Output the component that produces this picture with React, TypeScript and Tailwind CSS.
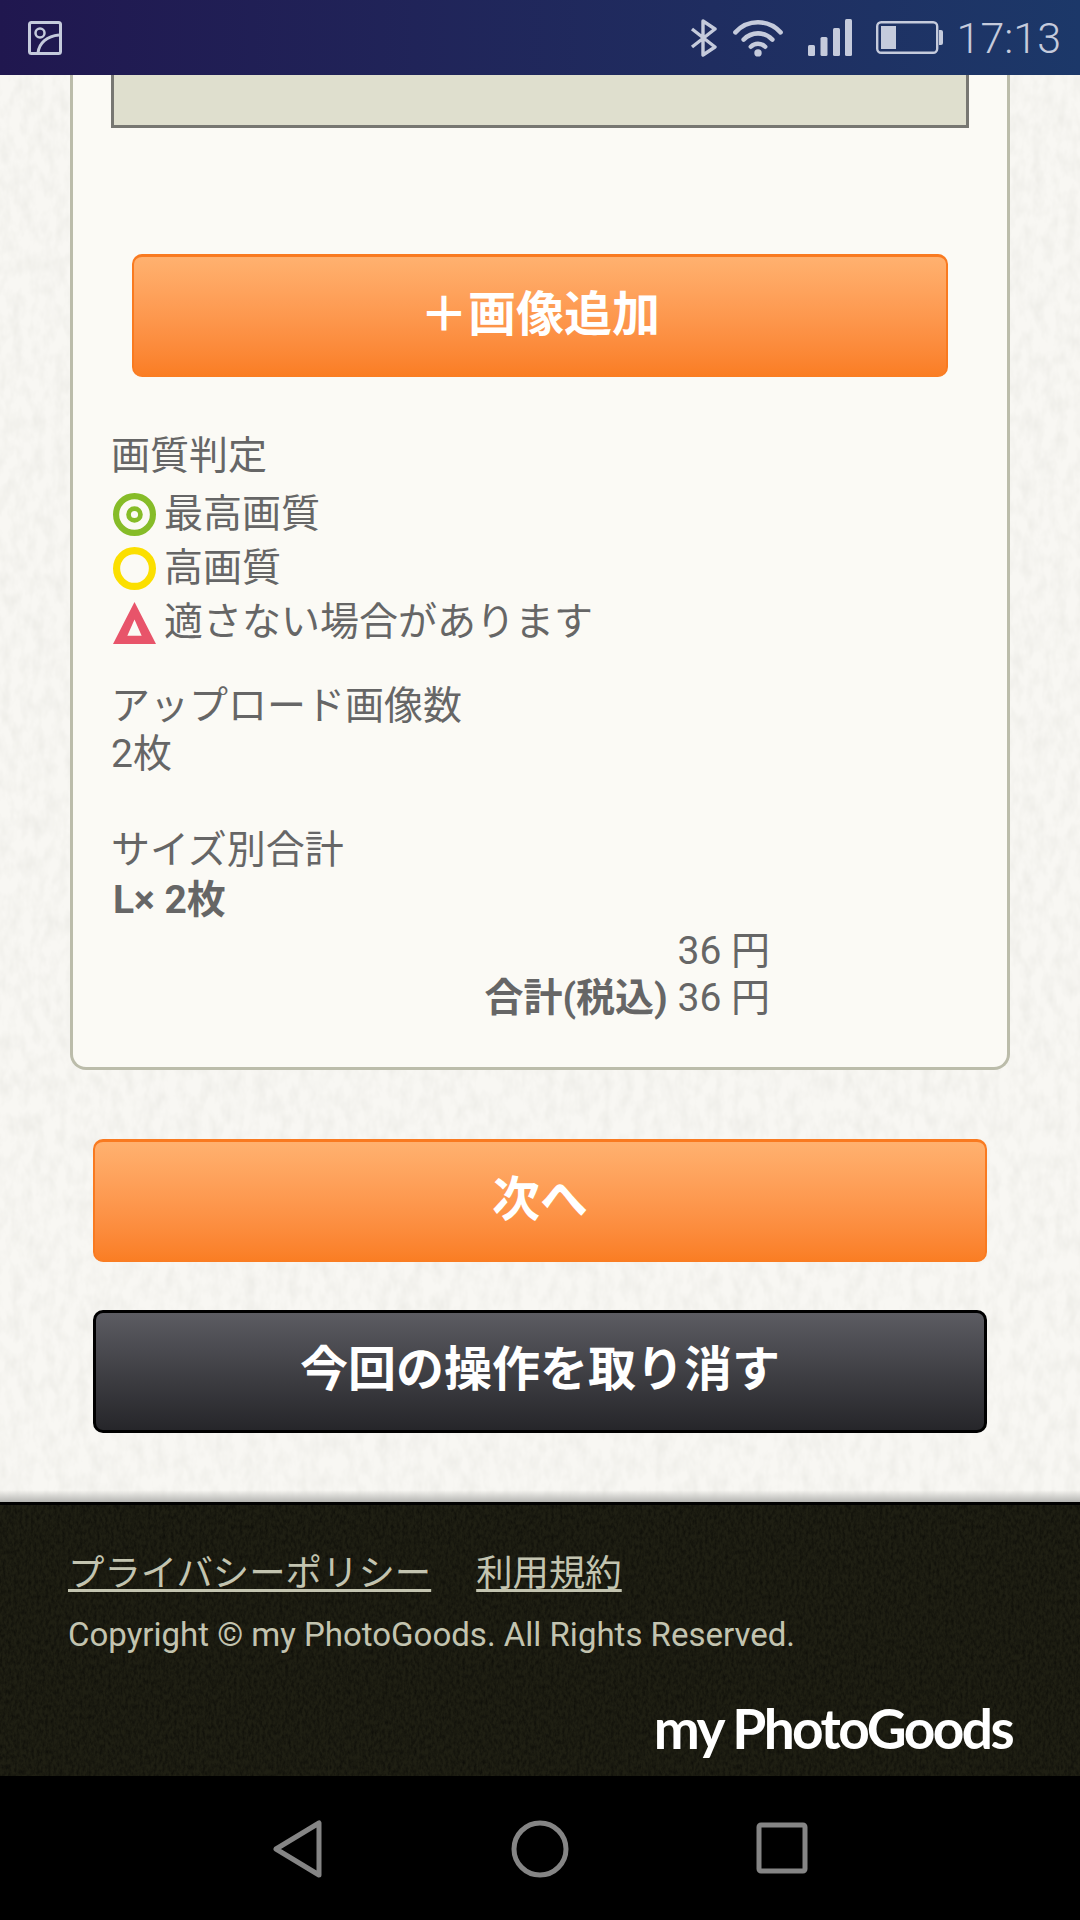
import React from "react";

const font = "font-['Roboto','Noto_Sans_CJK_JP',sans-serif]";

const StatusBar = () => (
  <div className="h-[75px] shrink-0 flex items-center bg-gradient-to-r from-[#20174f] to-[#1c3869] text-[#c5cbdc]">
    <svg className="ml-[28px] w-[34px] h-[34px]" viewBox="0 0 34 34" fill="none" stroke="currentColor" strokeWidth="3">
      <rect x="1.5" y="1.5" width="31" height="31" rx="2" />
      <circle cx="12" cy="12" r="4.5" strokeWidth="2.5" />
      <path d="M10 32c1-10 9-17 21-18" />
    </svg>
    <div className="ml-auto flex items-center">
      <svg className="w-[28px] h-[38px]" viewBox="0 0 28 38" fill="none" stroke="currentColor" strokeWidth="3.4">
        <path d="M2 10 L25 28 L13 36 V2 L25 10 L2 28" strokeLinejoin="round" />
      </svg>
      <svg className="ml-[14px] w-[52px] h-[38px]" viewBox="0 0 50 37" fill="none" stroke="currentColor" strokeWidth="4.4" strokeLinecap="round">
        <path d="M3 13 C15 0 35 0 47 13" />
        <path d="M11 20 C19 12 31 12 39 20" />
        <path d="M18 27 C22 23 28 23 32 27" />
        <circle cx="25" cy="33" r="3.6" fill="currentColor" stroke="none" />
      </svg>
      <svg className="ml-[24px] w-[44px] h-[37px]" viewBox="0 0 44 37" fill="currentColor">
        <rect x="0" y="26" width="7" height="11" rx="1.5" />
        <rect x="12.5" y="18" width="7" height="19" rx="1.5" />
        <rect x="25" y="9" width="7" height="28" rx="1.5" />
        <rect x="37" y="0" width="7" height="37" rx="1.5" />
      </svg>
      <svg className="ml-[24px] w-[67px] h-[33px]" viewBox="0 0 67 33" fill="none">
        <rect x="1.2" y="1.2" width="60" height="30.6" rx="4" stroke="currentColor" strokeWidth="2.4" />
        <rect x="5" y="5" width="15" height="23" fill="currentColor" />
        <path d="M63 9h2a2 2 0 0 1 2 2v11a2 2 0 0 1-2 2h-2z" fill="currentColor" />
      </svg>
      <span className="ml-[14px] mr-[19px] text-[43px] leading-[42px] font-['Roboto',sans-serif] font-light">17:13</span>
    </div>
  </div>
);

// faint grain behind the page and the footer
const Grain = ({ id, freq, matrix }: { id: string; freq: string; matrix: string }) => (
  <svg className="absolute inset-0 w-full h-full" aria-hidden="true">
    <filter id={id}>
      <feTurbulence type="fractalNoise" baseFrequency={freq} numOctaves="3" seed="4" />
      <feColorMatrix values={matrix} />
    </filter>
    <rect width="100%" height="100%" filter={`url(#${id})`} />
  </svg>
);

const Row = ({ icon, label }: { icon: React.ReactNode; label: string }) => (
  <div className="h-[54px] flex items-center pl-[2px]">
    <span className="w-[43px] h-[43px] mr-[8px] shrink-0">{icon}</span>
    {label}
  </div>
);

const OrangeButton = ({ label, className }: { label: string; className: string }) => (
  <button className={`block pb-[5px] rounded-[10px] border-t-[3px] border-x-2 border-x-[#f97a20] border-t-[#f97a20] bg-gradient-to-b from-[#ffb16f] to-[#fa7d22] text-white font-bold ${className}`}>
    {label}
  </button>
);

const Card = () => (
  <div className="mx-[70px] h-[995px] border-x-[3px] border-b-[3px] border-[#bbbcaa] rounded-b-[16px] bg-[#fbfaf5] px-[38px]">
    <div className="h-[53px] border-x-[3px] border-b-[3px] border-[#777772] bg-[#dfdfce]" />
    <OrangeButton label="＋画像追加" className="mt-[126px] mx-[21px] w-[816px] h-[123px] text-[48px]" />
    <div className="mt-[53px] text-[39px] leading-[53px] text-[#666666]">
      <div>画質判定</div>
      <div className="mt-[4px]">
        <Row
          label="最高画質"
          icon={
            <svg viewBox="0 0 42 42" fill="none">
              <circle cx="21" cy="21" r="18" stroke="#86bc28" strokeWidth="6" />
              <circle cx="21" cy="21" r="5.8" stroke="#86bc28" strokeWidth="4.6" />
            </svg>
          }
        />
        <Row
          label="高画質"
          icon={
            <svg viewBox="0 0 42 42" fill="none">
              <circle cx="21" cy="21" r="17.5" stroke="#fbdf00" strokeWidth="7" />
            </svg>
          }
        />
        <Row
          label="適さない場合があります"
          icon={
            <svg viewBox="0 0 42 42">
              <path d="M21 1 L42 42 H0 Z M21 18 L14 34 H28 Z" fill="#e8546a" fillRule="evenodd" />
            </svg>
          }
        />
      </div>
      <div className="mt-[33px] leading-[48px]">
        <div>アップロード画像数</div>
        <div>2枚</div>
      </div>
      <div className="mt-[47px] leading-[50px]">
        <div>サイズ別合計</div>
        <div className="pl-[2px] font-bold">L× 2枚</div>
      </div>
      <div className="mt-[3px] pr-[199px] leading-[47px] text-right">
        <div>36 円</div>
        <div>
          <span className="font-bold">合計(税込)</span> 36 円
        </div>
      </div>
    </div>
  </div>
);

const Footer = () => (
  <div className="relative h-[274px] shrink-0 border-t-[3px] border-black bg-[#1f1f13] text-[#c3c4b0]">
    <Grain id="grain-dark" freq="0.35 0.2" matrix="0 0 0 0 0  0 0 0 0 0  0 0 0 0 0  0 0 0 0.9 -0.3" />
    <div className="relative pl-[68px] pr-[68px]">
      <div className="pt-[44px] flex gap-[45px] text-[36.4px] leading-[50px]">
        <span className="underline underline-offset-[3px]">プライバシーポリシー</span>
        <span className="underline underline-offset-[3px]">利用規約</span>
      </div>
      <div className="mt-[16px] text-[33px] leading-[40px]">Copyright © my PhotoGoods. All Rights Reserved.</div>
      <div className="mt-[43px] text-right text-[55px] leading-[60px] font-bold font-['Lato',sans-serif] text-white tracking-[-2.6px]">
        my PhotoGoods
      </div>
    </div>
  </div>
);

const NavBar = () => (
  <div className="h-[144px] shrink-0 bg-black flex justify-center items-start pt-[44px]">
    <svg className="w-[50px] h-[58px]" viewBox="0 0 50 58" fill="none" stroke="#858585" strokeWidth="5" strokeLinejoin="round">
      <path d="M46 3 V55 L3 29 Z" />
    </svg>
    <svg className="ml-[188px] w-[58px] h-[58px]" viewBox="0 0 58 58" fill="none" stroke="#858585" strokeWidth="5">
      <circle cx="29" cy="29" r="26" />
    </svg>
    <svg className="ml-[187px] w-[52px] h-[52px] mt-[2px]" viewBox="0 0 52 52" fill="none" stroke="#858585" strokeWidth="5">
      <rect x="3" y="3" width="46" height="46" rx="2" />
    </svg>
  </div>
);

export default function App() {
  return (
    <div className={`w-[1080px] h-[1920px] flex flex-col overflow-hidden ${font}`}>
      <StatusBar />
      <div className="relative flex-1 bg-[#f8f7f3]">
        <Grain id="grain-light" freq="0.09 0.05" matrix="0 0 0 0 0.5  0 0 0 0 0.5  0 0 0 0 0.45  0 0 0 0.3 -0.11" />
        <div className="absolute bottom-0 inset-x-0 h-[12px] bg-gradient-to-b from-transparent to-[#b5b5b2]" />
        <div className="relative">
          <Card />
          <OrangeButton label="次へ" className="mt-[69px] mx-[93px] w-[894px] h-[123px] text-[48px]" />
          <button className="block pb-[4px] mt-[48px] mx-[93px] w-[894px] h-[123px] rounded-[10px] border-[3px] border-black bg-gradient-to-b from-[#5c5c62] to-[#26262a] text-white font-bold text-[48px]">
            今回の操作を取り消す
          </button>
        </div>
      </div>
      <Footer />
      <NavBar />
    </div>
  );
}
